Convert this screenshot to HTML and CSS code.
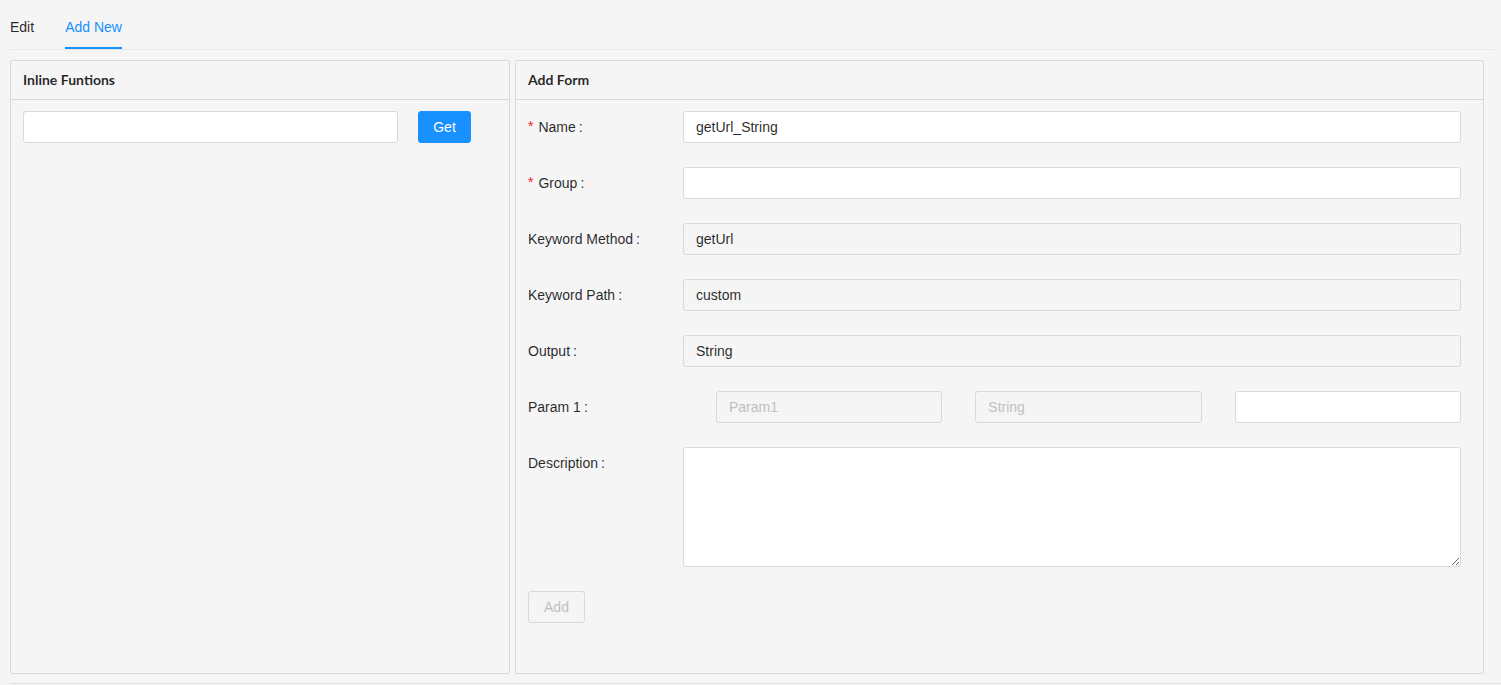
FILE: index.html
```html
<!DOCTYPE html>
<html lang="en">
<head>
    <meta charset="UTF-8" />
    <meta name="viewport" content="width=device-width, initial-scale=1" />
    <title>Inline Functions</title>
    <link rel="stylesheet" href="styles.css">
</head>
<body>
    <div class="page">
        <div class="tabs">
            <div class="tab">Edit</div>
            <div class="tab active">Add New</div>
        </div>

        <div class="panels">
            <div class="card card-left">
                <div class="card-head">Inline Funtions</div>
                <div class="card-body">
                    <div class="search">
                        <input class="input search-input" type="text">
                        <button class="btn primary">Get</button>
                    </div>
                </div>
            </div>

            <div class="card card-right">
                <div class="card-head">Add Form</div>
                <div class="card-body">
                    <form class="form">
                        <div class="form-row">
                            <label class="label"><span class="req">*</span>Name<span class="colon">:</span></label>
                            <div class="control"><input class="input" type="text" value="getUrl_String"></div>
                        </div>
                        <div class="form-row">
                            <label class="label"><span class="req">*</span>Group<span class="colon">:</span></label>
                            <div class="control"><input class="input" type="text"></div>
                        </div>
                        <div class="form-row">
                            <label class="label">Keyword Method<span class="colon">:</span></label>
                            <div class="control"><input class="input readonly" type="text" value="getUrl" readonly></div>
                        </div>
                        <div class="form-row">
                            <label class="label">Keyword Path<span class="colon">:</span></label>
                            <div class="control"><input class="input readonly" type="text" value="custom" readonly></div>
                        </div>
                        <div class="form-row">
                            <label class="label">Output<span class="colon">:</span></label>
                            <div class="control"><input class="input readonly" type="text" value="String" readonly></div>
                        </div>
                        <div class="form-row">
                            <label class="label">Param 1<span class="colon">:</span></label>
                            <div class="control params">
                                <div class="param"><input class="input" type="text" value="Param1" disabled></div>
                                <div class="param"><input class="input" type="text" value="String" disabled></div>
                                <div class="param"><input class="input" type="text"></div>
                            </div>
                        </div>
                        <div class="form-row">
                            <label class="label">Description<span class="colon">:</span></label>
                            <div class="control"><textarea class="input textarea"></textarea></div>
                        </div>
                        <div class="form-actions">
                            <button class="btn" type="button" disabled>Add</button>
                        </div>
                    </form>
                </div>
            </div>
        </div>

        <div class="footer-line"></div>
    </div>
</body>
</html>
```

FILE: styles.css
```css
body {
    margin: 0;
    background: #f5f5f5;
    color: rgba(0, 0, 0, 0.85);
    font-family: "Liberation Sans", Arial, sans-serif;
    font-size: 14px;
}

.page {
    padding-left: 10px;
}

/* Tabs */
.tabs {
    display: flex;
    gap: 31px;
    margin-right: 7px;
    border-bottom: 1px solid #e8e8e8;
}

.tab {
    padding: 16px 0 9px;
    line-height: 22px;
    border-bottom: 2px solid transparent;
    cursor: pointer;
}

.tab.active {
    color: #1890ff;
    border-bottom-color: #1890ff;
}

/* Panels */
.panels {
    display: flex;
    gap: 5px;
    margin-top: 10px;
}

.card {
    height: 612px;
    border: 1px solid #d9d9d9;
    border-radius: 2px;
    box-sizing: content-box;
    display: flex;
    flex-direction: column;
}

.card-left {
    width: 498px;
}

.card-right {
    width: 967px;
}

.card-head {
    height: 38px;
    line-height: 38px;
    padding-left: 12px;
    font-family: Lato, "Liberation Sans", sans-serif;
    font-weight: bold;
    color: rgba(0, 0, 0, 0.85);
    border-bottom: 1px solid #d9d9d9;
}

.card-body {
    padding: 11px 12px;
}

/* Inputs */
.input {
    display: block;
    width: 100%;
    height: 32px;
    box-sizing: border-box;
    padding: 4px 12px;
    font-family: inherit;
    font-size: 14px;
    color: rgba(0, 0, 0, 0.85);
    background: #fff;
    border: 1px solid #d9d9d9;
    border-radius: 3px;
    outline: none;
}

.input.readonly {
    background: #f5f5f5;
}

.input:disabled {
    background: #f5f5f5;
    color: #bfbfbf;
}

.textarea {
    height: 120px;
    resize: vertical;
}

.btn {
    height: 32px;
    padding: 0 15px;
    font-family: inherit;
    font-size: 14px;
    color: rgba(0, 0, 0, 0.85);
    background: #fff;
    border: 1px solid #d9d9d9;
    border-radius: 3px;
    cursor: pointer;
}

.btn.primary {
    color: #fff;
    background: #1890ff;
    border-color: #1890ff;
}

.btn:disabled {
    color: #bfbfbf;
    background: #f5f5f5;
    cursor: not-allowed;
}

.search {
    display: flex;
    gap: 20px;
}

.search-input {
    width: 375px;
}

.search .btn {
    width: 53px;
    padding: 0;
}

/* Add form */
.form {
    width: 933px;
}

.form-row {
    display: flex;
    margin-bottom: 24px;
}

.label {
    width: 155px;
    flex-shrink: 0;
    line-height: 32px;
}

.req {
    color: #f5222d;
    margin-right: 5px;
    position: relative;
    top: -1px;
}

.colon {
    margin-left: 3px;
}

.control {
    flex: 1;
}

.params {
    display: grid;
    grid-template-columns: repeat(3, 1fr);
}

.param {
    padding-left: 33px;
}

.form-actions .btn {
    width: 57px;
    padding: 0;
}

.footer-line {
    margin-top: 9px;
    border-top: 1px solid #e0e0e0;
}
```
